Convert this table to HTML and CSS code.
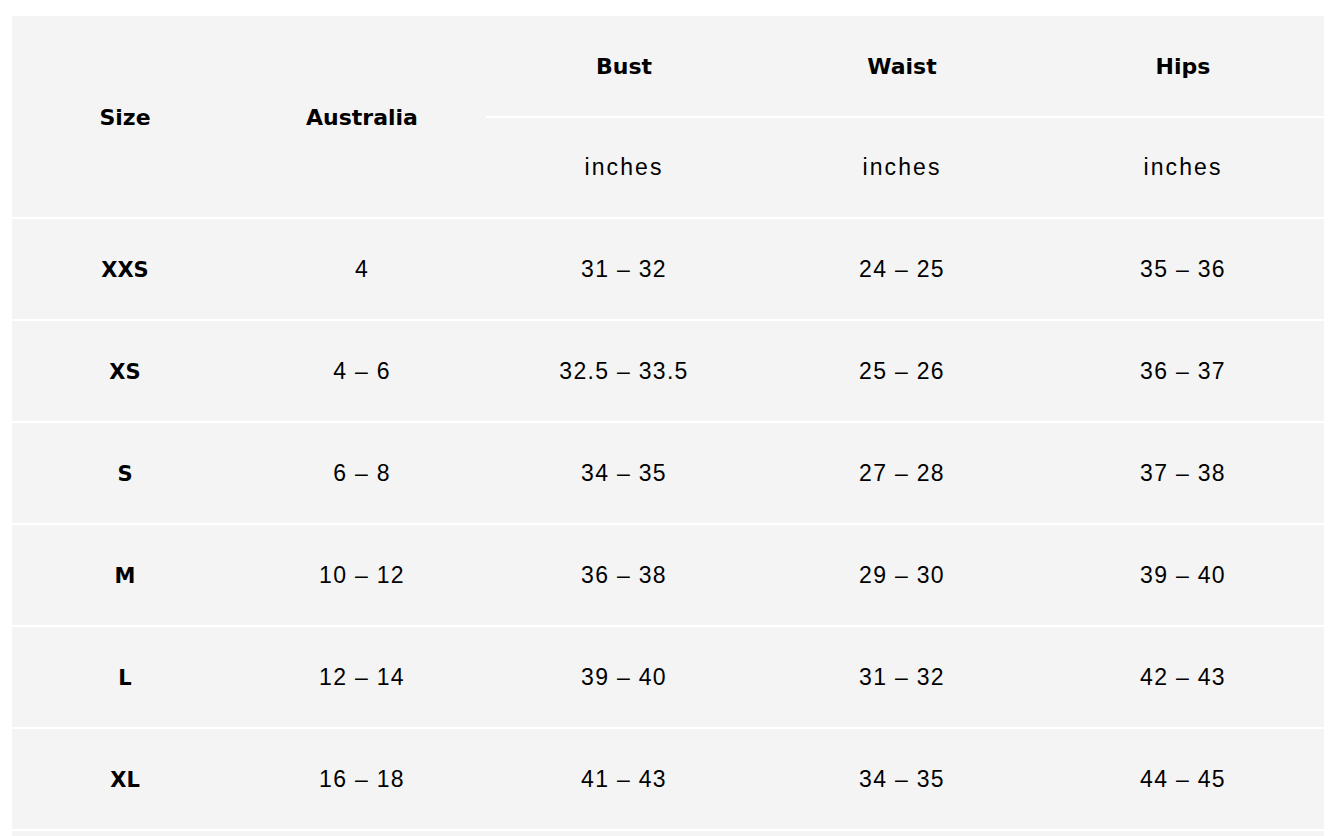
FILE: index.html
```html
<!DOCTYPE html>
<html lang="en">
<head>
<meta charset="utf-8">
<title>Size chart</title>
<link rel="stylesheet" href="styles.css">
</head>
<body>
<div class="wrap">
<table class="chart">
  <colgroup>
    <col class="c-size"><col class="c-au"><col class="c-bust"><col class="c-waist"><col class="c-hips">
  </colgroup>
  <thead>
    <tr class="h1">
      <th rowspan="2">Size</th>
      <th rowspan="2">Australia</th>
      <th>Bust</th>
      <th>Waist</th>
      <th>Hips</th>
    </tr>
    <tr class="h2">
      <td class="unit">inches</td>
      <td class="unit">inches</td>
      <td class="unit">inches</td>
    </tr>
  </thead>
  <tbody>
    <tr><th>XXS</th><td>4</td><td>31 – 32</td><td>24 – 25</td><td>35 – 36</td></tr>
    <tr><th>XS</th><td>4 – 6</td><td>32.5 – 33.5</td><td>25 – 26</td><td>36 – 37</td></tr>
    <tr><th>S</th><td>6 – 8</td><td>34 – 35</td><td>27 – 28</td><td>37 – 38</td></tr>
    <tr><th>M</th><td>10 – 12</td><td>36 – 38</td><td>29 – 30</td><td>39 – 40</td></tr>
    <tr><th>L</th><td>12 – 14</td><td>39 – 40</td><td>31 – 32</td><td>42 – 43</td></tr>
    <tr><th>XL</th><td>16 – 18</td><td>41 – 43</td><td>34 – 35</td><td>44 – 45</td></tr>
    <tr><th>XXL</th><td>18 – 20</td><td>44 – 46</td><td>37 – 39</td><td>47 – 49</td></tr>
  </tbody>
</table>
</div>
</body>
</html>
```
FILE: styles.css
```css
html, body {
  margin: 0;
  padding: 0;
  background: #ffffff;
}
.wrap {
  padding: 14px 12px 0 12px;
}
.chart {
  width: 1312px;
  border-collapse: separate;
  border-spacing: 0 2px;
  table-layout: fixed;
  font-family: "Liberation Sans", Arial, sans-serif;
  color: #000;
}
.c-size { width: 226px; }
.c-au { width: 248px; }
.c-bust { width: 276px; }
.c-waist { width: 280px; }
.c-hips { width: 282px; }
.chart th, .chart td {
  background: #f4f4f4;
  text-align: center;
  vertical-align: middle;
  padding: 0;
  font-size: 23px;
  letter-spacing: 1.3px;
}
.chart th {
  font-family: "DejaVu Sans", "Liberation Sans", sans-serif;
  font-weight: 700;
  font-size: 22px;
  letter-spacing: 0;
}
.chart tbody th {
  font-size: 21px;
}
.chart td {
  font-weight: 400;
}
.chart .unit {
  letter-spacing: 2.1px;
}
.h1 th { height: 99px; padding-top: 1px; }
.h2 td { height: 99px; }
.chart tbody th, .chart tbody td { height: 99px; padding-top: 1px; }
```
